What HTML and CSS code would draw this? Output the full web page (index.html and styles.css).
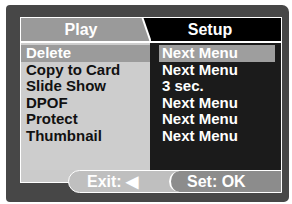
FILE: index.html
```html
<!DOCTYPE html>
<html>
<head>
<meta charset="utf-8">
<link rel="stylesheet" href="styles.css">
</head>
<body>
<div class="frame">
  <div class="panel">
    <div class="tabs">
      <div class="tab tab-play">Play</div>
      <svg class="slant" width="10" height="23" viewBox="0 0 10 23">
        <rect x="0" y="0" width="10" height="23" fill="#000"/>
        <polygon points="0,0 1.5,0 9.5,23 0,23" fill="#9a9a9a"/>
        <line x1="1.5" y1="0" x2="9.5" y2="23" stroke="#fff" stroke-width="2"/>
      </svg>
      <div class="tab tab-setup">Setup</div>
    </div>
    <div class="menu">
      <ul class="col col-labels">
        <li class="item sel">Delete</li>
        <li class="item">Copy to Card</li>
        <li class="item">Slide Show</li>
        <li class="item">DPOF</li>
        <li class="item">Protect</li>
        <li class="item">Thumbnail</li>
      </ul>
      <ul class="col col-values">
        <li class="value sel">Next Menu</li>
        <li class="value">Next Menu</li>
        <li class="value">3 sec.</li>
        <li class="value">Next Menu</li>
        <li class="value">Next Menu</li>
        <li class="value">Next Menu</li>
      </ul>
    </div>
    <div class="footer">
      <div class="pills">
        <div class="pill-exit">Exit: &#9664;</div>
        <div class="pill-set">Set: OK</div>
      </div>
    </div>
  </div>
</div>
</body>
</html>
```
FILE: styles.css
```css
html, body {
  margin: 0;
  padding: 0;
  background: #fff;
}
body {
  width: 292px;
  height: 204px;
  overflow: hidden;
  font-family: "Liberation Sans", Arial, sans-serif;
  font-weight: bold;
}
.frame {
  box-sizing: border-box;
  margin: 5px 0 0 6px;
  width: 283px;
  height: 197px;
  padding: 12px 7px 0 14px;
  background: #474747;
  border-radius: 4px 7px 5px 4px;
}
.panel {
  border: 1px solid #fff;
  background: #cbcbcb;
}
.tabs {
  display: flex;
  height: 23px;
  border-bottom: 2px solid #fff;
  font-size: 16px;
  line-height: 23px;
  color: #fff;
}
.tab {
  text-align: center;
}
.tab-play {
  width: 120px;
  background: #9a9a9a;
}
.slant {
  display: block;
  flex: none;
}
.tab-setup {
  flex: 1;
  background: #000;
  padding-right: 12px;
}
.menu {
  display: flex;
  height: 127px;
  font-size: 15px;
  line-height: 16.6px;
}
.col {
  list-style: none;
  margin: 0;
  padding: 2px 0 0 0;
}
.col-labels {
  width: 129px;
  background: #cdcdcd;
  color: #111;
}
.col-values {
  flex: 1;
  background: #1b1b1b;
  color: #fff;
  padding: 2px 6px 0 9px;
}
.item {
  padding-left: 5px;
  white-space: nowrap;
}
.item.sel {
  background: #9b9b9b;
  color: #fff;
}
.value {
  padding-left: 3px;
  white-space: nowrap;
}
.value.sel {
  background: #9e9e9e;
}
.footer {
  display: flex;
  height: 23px;
  margin-bottom: -11px;
  padding-left: 47px;
}
.pills {
  flex: 1;
  display: flex;
  box-sizing: border-box;
  height: 23px;
  margin-right: -1px;
  border: 1px solid #fff;
  border-radius: 12px 0 0 12px;
  background: #bfbfbf;
  font-size: 16px;
  line-height: 21px;
  color: #fff;
  overflow: hidden;
}
.pill-exit {
  flex: 1;
  padding-left: 18px;
  white-space: nowrap;
}
.pill-set {
  box-sizing: border-box;
  width: 112px;
  background: #8c8c8c;
  border-left: 2px solid #fff;
  border-radius: 11px 0 0 11px;
  padding-left: 16px;
  white-space: nowrap;
}
```
